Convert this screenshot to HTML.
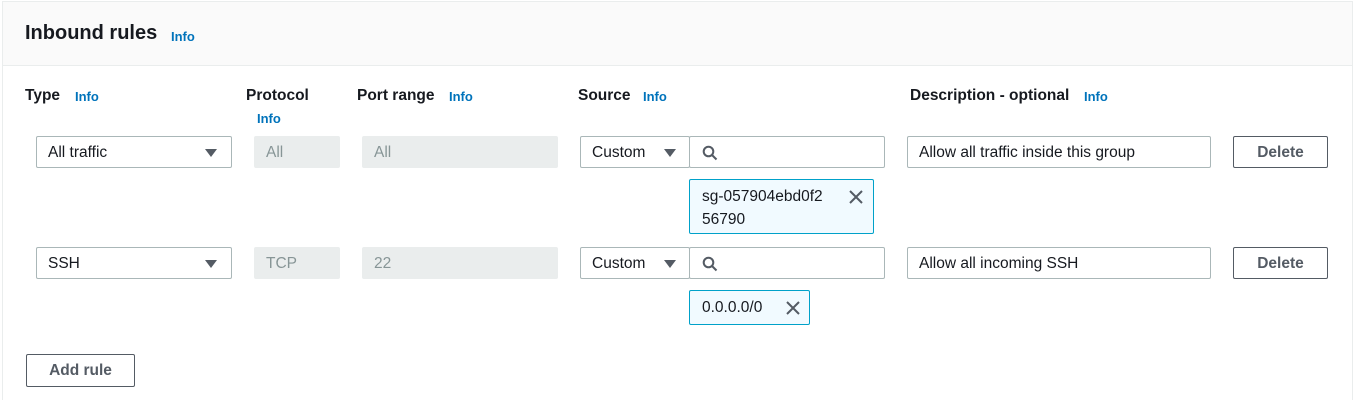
<!DOCTYPE html>
<html><head><meta charset="utf-8"><style>
*{box-sizing:border-box;margin:0;padding:0}
html,body{width:1356px;height:400px;overflow:hidden}
body{background:#fff;font-family:"Liberation Sans",sans-serif;font-size:16px;color:#16191f;position:relative}
.a{position:absolute;white-space:nowrap}
.card{position:absolute;left:2px;top:1px;width:1351px;height:399px;border:1px solid #eaeded;border-bottom:none}
.hdr{position:absolute;left:3px;top:2px;width:1349px;height:64px;background:#fafafa;border-bottom:1px solid #eaeded}
.info{color:#0073bb;font-weight:bold;font-size:13px}
.h{font-weight:bold;font-size:15.5px}
.box{position:absolute;border:1px solid #aab7b8;border-radius:2px;background:#fff;height:32px;line-height:32px;padding-left:11px;font-size:15.5px}
.dis{background:#eaeded;border-color:#eaeded;color:#879596}
.tri{position:absolute;right:14px;top:12px;width:0;height:0;border-left:6px solid transparent;border-right:6px solid transparent;border-top:8px solid #545b64}
.btn{position:absolute;border:1px solid #545b64;border-radius:2px;background:#fff;color:#545b64;font-weight:bold;text-align:center;height:32px;line-height:32px;font-size:15.5px}
.tok{position:absolute;border:1px solid #00a1c9;border-radius:2px;background:#f1faff;padding:5px 0 0 12px;line-height:23px;font-size:15.5px}
.x{position:absolute}
</style></head><body>
<div class="card"></div>
<div class="hdr"></div>
<div class="a" style="left:25px;top:22px;font-size:20px;font-weight:bold">Inbound rules</div>
<div class="a info" style="left:171px;top:29px">Info</div>

<div class="a h" style="left:25px;top:87px">Type</div><div class="a info" style="left:75px;top:89px">Info</div>
<div class="a h" style="left:246px;top:87px">Protocol</div><div class="a info" style="left:257px;top:111px">Info</div>
<div class="a h" style="left:357px;top:87px">Port range</div><div class="a info" style="left:449px;top:89px">Info</div>
<div class="a h" style="left:578px;top:87px">Source</div><div class="a info" style="left:643px;top:89px">Info</div>
<div class="a h" style="left:910px;top:87px">Description - optional</div><div class="a info" style="left:1084px;top:89px">Info</div>

<!-- row1 -->
<div class="box" style="left:36px;top:136px;width:196px">All traffic<div class="tri"></div></div>
<div class="box dis" style="left:254px;top:136px;width:86px">All</div>
<div class="box dis" style="left:362px;top:136px;width:196px">All</div>
<div class="box" style="left:580px;top:136px;width:110px">Custom<div class="tri" style="right:13px"></div></div>
<div class="box" style="left:689px;top:136px;width:196px"><svg class="x" style="left:12px;top:8px" width="16" height="16" viewBox="0 0 16 16"><circle cx="6.5" cy="6.5" r="4.8" fill="none" stroke="#545b64" stroke-width="2"/><path d="M10 10l4.5 4.5" stroke="#545b64" stroke-width="2"/></svg></div>
<div class="box" style="left:907px;top:136px;width:304px">Allow all traffic inside this group</div>
<div class="btn" style="left:1233px;top:136px;width:95px">Delete</div>
<div class="tok" style="left:689px;top:179px;width:185px;height:55px">sg-057904ebd0f2<br>56790<svg class="x" style="left:158px;top:9px" width="16" height="16" viewBox="0 0 16 16"><path d="M2 2l12 12M14 2L2 14" stroke="#545b64" stroke-width="2"/></svg></div>

<!-- row2 -->
<div class="box" style="left:36px;top:247px;width:196px">SSH<div class="tri"></div></div>
<div class="box dis" style="left:254px;top:247px;width:86px">TCP</div>
<div class="box dis" style="left:362px;top:247px;width:196px">22</div>
<div class="box" style="left:580px;top:247px;width:110px">Custom<div class="tri" style="right:13px"></div></div>
<div class="box" style="left:689px;top:247px;width:196px"><svg class="x" style="left:12px;top:8px" width="16" height="16" viewBox="0 0 16 16"><circle cx="6.5" cy="6.5" r="4.8" fill="none" stroke="#545b64" stroke-width="2"/><path d="M10 10l4.5 4.5" stroke="#545b64" stroke-width="2"/></svg></div>
<div class="box" style="left:907px;top:247px;width:304px">Allow all incoming SSH</div>
<div class="btn" style="left:1233px;top:247px;width:95px">Delete</div>
<div class="tok" style="left:689px;top:290px;width:121px;height:35px;padding-top:5px">0.0.0.0/0<svg class="x" style="left:95px;top:9px" width="16" height="16" viewBox="0 0 16 16"><path d="M2 2l12 12M14 2L2 14" stroke="#545b64" stroke-width="2"/></svg></div>

<div class="btn" style="left:26px;top:354px;width:109px;height:33px">Add rule</div>
</body></html>
